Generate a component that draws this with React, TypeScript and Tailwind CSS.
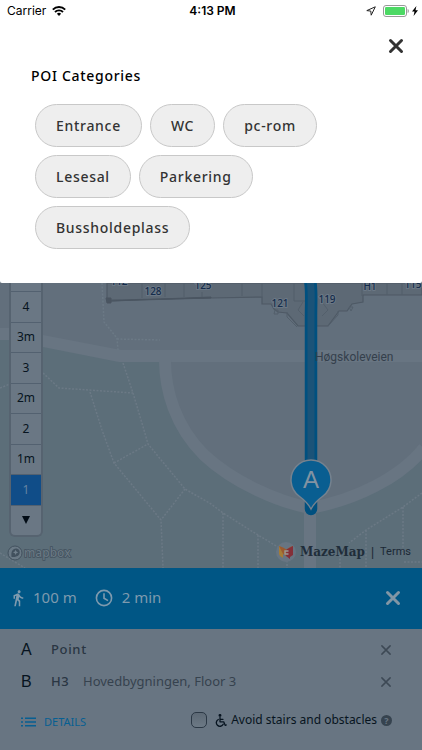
import React from 'react';

const categories = ['Entrance', 'WC', 'pc-rom', 'Lesesal', 'Parkering', 'Bussholdeplass'];
const floors = ['4', '3m', '3', '2m', '2', '1m', '1'];

const Cross = ({ className, width }: { className: string; width: number }) => (
  <svg viewBox="0 0 16 16" className={className} fill="none" stroke="currentColor" strokeWidth={width} strokeLinecap="round">
    <path d="M2.5 2.5 13.5 13.5M13.5 2.5 2.5 13.5" />
  </svg>
);

const StatusBar = () => (
  <div className="grid grid-cols-3 items-center h-[22px] pl-[7px] pr-1 text-xs text-black font-['Inter',sans-serif]">
    <div className="flex items-center gap-[6px]">
      <span>Carrier</span>
      <svg viewBox="0 0 14 10" className="w-[14px] h-[10px]" fill="none" stroke="#000" strokeWidth="1.9">
        <path d="M.8 3.6a8.8 8.8 0 0 1 12.4 0" />
        <path d="M3 6a5.7 5.7 0 0 1 8 0" />
        <path d="M7 10 4.900 7.800a3 3 0 0 1 4.200 0z" fill="#000" stroke="none" />
      </svg>
    </div>
    <span className="text-center font-semibold">4:13 PM</span>
    <div className="flex items-center justify-end gap-[3px]">
      <svg viewBox="0 0 10 10" className="w-[10px] h-[10px] mr-1" fill="none" stroke="#222" strokeWidth="1" strokeLinejoin="round">
        <path d="M9.300.800.800 4.600l4 .500.400 4.100z" />
      </svg>
      <svg viewBox="0 0 26 12" className="w-[26px] h-3">
        <rect x=".5" y=".5" width="23" height="11" rx="2.5" fill="#fff" stroke="#999" />
        <rect x="2" y="2" width="20" height="8" rx="1.2" fill="#4cd964" />
        <path d="M24.600 4v4c1-.4 1.200-1.200 1.200-2s-.2-1.600-1.200-2z" fill="#999" />
      </svg>
      <svg viewBox="0 0 6 10" className="w-[6px] h-[10px]">
        <path d="M4.400 0 0 5.600h2.500L1.600 10 6 4.200H3.500z" />
      </svg>
    </div>
  </div>
);

const CategoryDialog = () => (
  <section role="dialog" aria-labelledby="poi-title" className="bg-white pb-[34px] rounded-b-[2px]">
    <StatusBar />
    <div className="flex justify-end pt-4 pr-[18px]">
      <button aria-label="Close categories" className="text-[#333]">
        <Cross className="w-4 h-4" width={3} />
      </button>
    </div>
    <h1 id="poi-title" className="pt-3 pl-[31px] text-sm leading-5 font-medium tracking-wider text-black">
      POI Categories
    </h1>
    <div className="flex flex-wrap gap-2 pt-[18px] pl-[35px] pr-16">
      {categories.map((name) => (
        <button
          key={name}
          className="h-[43px] px-5 rounded-full border border-[#c8c8c8] bg-[#eee] text-sm font-medium tracking-wider text-[#333]"
        >
          {name}
        </button>
      ))}
    </div>
  </section>
);

const MapCanvas = () => (
  <svg viewBox="0 283 422 285" preserveAspectRatio="xMidYMin slice" className="absolute inset-0 w-full h-full">
    <rect x="0" y="283" width="422" height="285" fill="#626f7c" />
    <path d="M0 334h10l33 7 77 15h44c1 30 10 70 40 99 30 28 75 47 106 53 45-8 90-30 112-58v118H0z" fill="#5c6e79" />

    {/* roads */}
    <g fill="none" stroke="#687582" strokeWidth="12" strokeLinejoin="round">
      <path d="M-2 334h12l33 7 77 15h304" />
      <path d="M165 360c0 30 10 66 39 95 30 28 75 47 106 53 45-8 90-30 114-60" />
      <path d="M310 508v62" />
    </g>

    {/* footpaths */}
    <g fill="none" stroke="#6b7985" strokeWidth="1.500" strokeDasharray="2 1.500">
      <path d="M102 283l2 39 13 16 1 12M117 339l43 1" />
      <path d="M123 363l10 30 11 37 4 14 37 45 26 15 12 9 35 22 20 12" />
      <path d="M43 373l16 15 74 5M90 392l12 38 12 33 47 57 2 48M114 463l34-19M185 489l-24 31" />
      <path d="M223 513v55M258 535v33M422 493l-19 14-37 23-17 13M403 507v48M366 530v38M340 548v20M404 562h18" />
      <path d="M0 388l10-4M0 553l25 15M287 550v18" />
    </g>

    {/* building */}
    <path
      d="M107 283v17h3l101-2 51-1v7h9l3 5 4 3 9 1 11 13h30l11-15h8l5-7 11-2v-7h59v-12z"
      fill="#5d6975"
      stroke="#4e5965"
      strokeWidth="1.200"
    />
    <path d="M106 298h5v5h-4zM110 301l30-1 71-2v-1z" fill="#4a5561" stroke="#4a5561" />
    <g fill="none" stroke="#535f6b" strokeWidth="1">
      <path d="M142 283v15M165 283v14M184 283v14M202 292v5M242 283v13M262 283v15M294 283v18h20M362 283v13M387 283v12M402 283v12" />
      <path d="M287 312v5l10 10M338 311v4l-10 11M303 302l-5 8 6 6M322 302l6 8-6 6" />
      <path d="M275 310h3v4h-4zM349 307h4l-2 4z" />
    </g>

    {/* route */}
    <path d="M310 280c2 10 1 20 1 36v193" fill="none" stroke="#00507f" strokeWidth="12.500" strokeLinecap="round" />
    <path d="M310 280c2 10 1 20 1 36v190" fill="none" stroke="#1b5378" strokeWidth="7" />

    <g fontFamily="'Noto Sans', sans-serif" fontSize="10" fontWeight="500" fill="#152c4b" stroke="#6b7885" strokeWidth="2" paintOrder="stroke" textAnchor="middle">
      <text x="119" y="285">112</text>
      <text x="153" y="295">128</text>
      <text x="203" y="289">125</text>
      <text x="280" y="307">121</text>
      <text x="327" y="303">119</text>
      <text x="370" y="290">H1</text>
      <text x="413" y="288">115</text>
    </g>
    <text x="315" y="361" fontFamily="Roboto, sans-serif" fontSize="12" fill="#35404c">Høgskoleveien</text>

    {/* start marker */}
    <path
      d="M311 509c-3-6-8-10-12-13a20 20 0 1 1 24 0c-4 3-9 7-12 13z"
      fill="#095e91"
      stroke="#75828f"
      strokeWidth="1.500"
    />
    <text x="311" y="488" fontFamily="'Liberation Sans', sans-serif" fontSize="24" fill="#8293a2" textAnchor="middle">A</text>
  </svg>
);

const FloorSelector = () => (
  <div className="absolute left-[9px] top-0 w-[34px] border-2 border-t-0 border-[#566370] rounded-b-md overflow-hidden bg-[#6a7784] text-xs text-[#071420]">
    <div className="h-2" />
    <div className="grid auto-rows-fr h-[244px]">
      {floors.map((floor) => (
        <button
          key={floor}
          className={floor === '1' ? 'bg-[#104d88] text-[#6584a3] border-t border-[#536170]' : 'border-t border-[#536170]'}
        >
          {floor}
        </button>
      ))}
      <button aria-label="Lower floors" className="flex items-center justify-center border-t border-[#536170]">
        <svg viewBox="0 0 8 8" className="w-2 h-2">
          <path d="M0 0h8L4 8z" fill="#020c16" />
        </svg>
      </button>
    </div>
  </div>
);

const MapboxLogo = () => (
  <svg viewBox="0 0 66 18" className="absolute left-[7px] bottom-[6px] w-[66px] h-[18px]">
    <circle cx="8" cy="9" r="7" fill="#6a7985" stroke="#42515e" />
    <path d="M4.600 13c-1-5 1-9 5-8.500 4 .6 4 6 1 7.500-2 1-4 1-6 1z" fill="#42515e" />
    <path d="M8.600 5.800l.8 1.800 1.800.8-1.800.8-.8 1.800-.8-1.800-1.800-.8 1.800-.8z" fill="#71808c" />
    <text x="17" y="13" fontFamily="'Noto Sans', sans-serif" fontSize="12" fontWeight="500" fill="#697883" stroke="#42515e" strokeWidth="1.500" paintOrder="stroke">
      mapbox
    </text>
  </svg>
);

const Attribution = () => (
  <div className="absolute right-[11px] bottom-2 flex items-center h-4 text-xs text-[#1b2835]">
    <svg viewBox="0 0 20 20" className="w-5 h-5 mr-1">
      <circle cx="10" cy="10" r="10" fill="#687582" />
      <path d="M3 4l4 2v10l-3-2-1-2z" fill="#a57c35" />
      <path d="M3 4l4 1.500 3.500 2L14 5l3-1v5l-7 5-3-2z" fill="#9a5a30" />
      <path d="M10.500 7.500 17 4v9l-3 2v2l-4-3z" fill="#842f38" />
      <path d="M12.500 9H9v3h3.500" fill="none" stroke="#9a9a95" strokeWidth="1.400" />
    </svg>
    <span className="font-bold text-[#202d3a] font-['DejaVu_Serif',serif]">MazeMap</span>
    <span className="px-[6px] font-['Liberation_Sans',sans-serif]">|</span>
    <a href="#terms" className="text-[11px] font-['Roboto',sans-serif]">Terms</a>
  </div>
);

const RoutePanel = () => (
  <section className="bg-[#687582]">
    <div className="flex items-center h-[61px] pb-[2px] px-[13px] bg-[#005685] text-[15px] text-[#7e9aae]">
      <svg viewBox="0 0 24 24" className="w-[18px] h-[18px] -ml-1" fill="currentColor">
        <path d="M13.500 5.500c1.100 0 2-.9 2-2s-.9-2-2-2-2 .9-2 2 .9 2 2 2zM9.800 8.900 7 23h2.100l1.800-8 2.100 2v6h2v-7.500l-2.100-2 .6-3C14.800 12 16.800 13 19 13v-2c-1.900 0-3.500-1-4.300-2.400l-1-1.600c-.4-.6-1-1-1.700-1-.3 0-.5.1-.8.1L6 8.300V13h2V9.600l1.800-.7" />
      </svg>
      <span className="pl-[6px]">100 m</span>
      <svg viewBox="0 0 18 18" className="w-[18px] h-[18px] ml-[18px]" fill="none" stroke="currentColor" strokeWidth="1.600">
        <circle cx="9" cy="9" r="7.600" />
        <path d="M9 4.200v5l4 2.400" />
      </svg>
      <span className="pl-[9px]">2 min</span>
      <button aria-label="Close route" className="ml-auto mr-2 text-[#8296a5]">
        <Cross className="w-4 h-4" width={3} />
      </button>
    </div>

    <div className="pl-[21px] pr-[30px] pt-[5px]">
      <div className="flex items-center h-8 text-[13px]">
        <span className="w-[30px] text-base text-[#071420] font-['Liberation_Sans',sans-serif]">A</span>
        <span className="font-medium tracking-wider text-[#2a3643]">Point</span>
        <button aria-label="Remove start" className="ml-auto text-[#3d4955]">
          <Cross className="w-3 h-3" width={2} />
        </button>
      </div>
      <div className="flex items-center h-8 text-[13px]">
        <span className="w-[30px] text-base text-[#071420] font-['Liberation_Sans',sans-serif]">B</span>
        <span className="w-8 font-medium tracking-wider text-[#2a3643]">H3</span>
        <span className="text-[#36424e]">Hovedbygningen, Floor 3</span>
        <button aria-label="Remove destination" className="ml-auto text-[#3d4955]">
          <Cross className="w-3 h-3" width={2} />
        </button>
      </div>
      <div className="flex items-center h-[52px] pb-2">
        <button className="flex items-center gap-2 pt-1 text-[11px] text-[#075f92]">
          <svg viewBox="0 0 15 10" className="w-[15px] h-[10px]" stroke="currentColor" strokeWidth="1.500">
            <path d="M0 1.200h2M4 1.200h11M0 5h2M4 5h11M0 8.800h2M4 8.800h11" />
          </svg>
          DETAILS
        </button>
        <label className="ml-auto flex items-center text-xs text-[#071420]">
          <input
            type="checkbox"
            className="appearance-none w-4 h-4 mr-2 rounded-[5px] border border-[#2b3845] bg-linear-to-b from-[#5d6975] to-[#6c7985]"
          />
          <svg viewBox="0 0 12 13" className="w-3 h-[13px] mr-1" fill="none" stroke="currentColor" strokeWidth="1.300" strokeLinecap="round" strokeLinejoin="round">
            <circle cx="5" cy="1.400" r=".8" fill="currentColor" />
            <path d="M5 3.500v4.300h3.700l1.600 3.600 1-.4M5 5.300h3" />
            <path d="M3.300 5.500a3.600 3.600 0 1 0 4.900 4.700" />
          </svg>
          Avoid stairs and obstacles
        </label>
        <button aria-label="Help" className="ml-1 w-[11px] h-[11px] rounded-full bg-[#36434f] text-[9px] leading-[11px] font-bold text-[#687582]">
          ?
        </button>
      </div>
    </div>
  </section>
);

const App = () => {
  return (
    <div className="flex flex-col min-h-screen bg-[#687582] font-['Noto_Sans',sans-serif]">
      <CategoryDialog />
      <main className="relative flex-1 min-h-[285px] overflow-hidden">
        <MapCanvas />
        <FloorSelector />
        <MapboxLogo />
        <Attribution />
      </main>
      <RoutePanel />
    </div>
  );
};

export default App;
